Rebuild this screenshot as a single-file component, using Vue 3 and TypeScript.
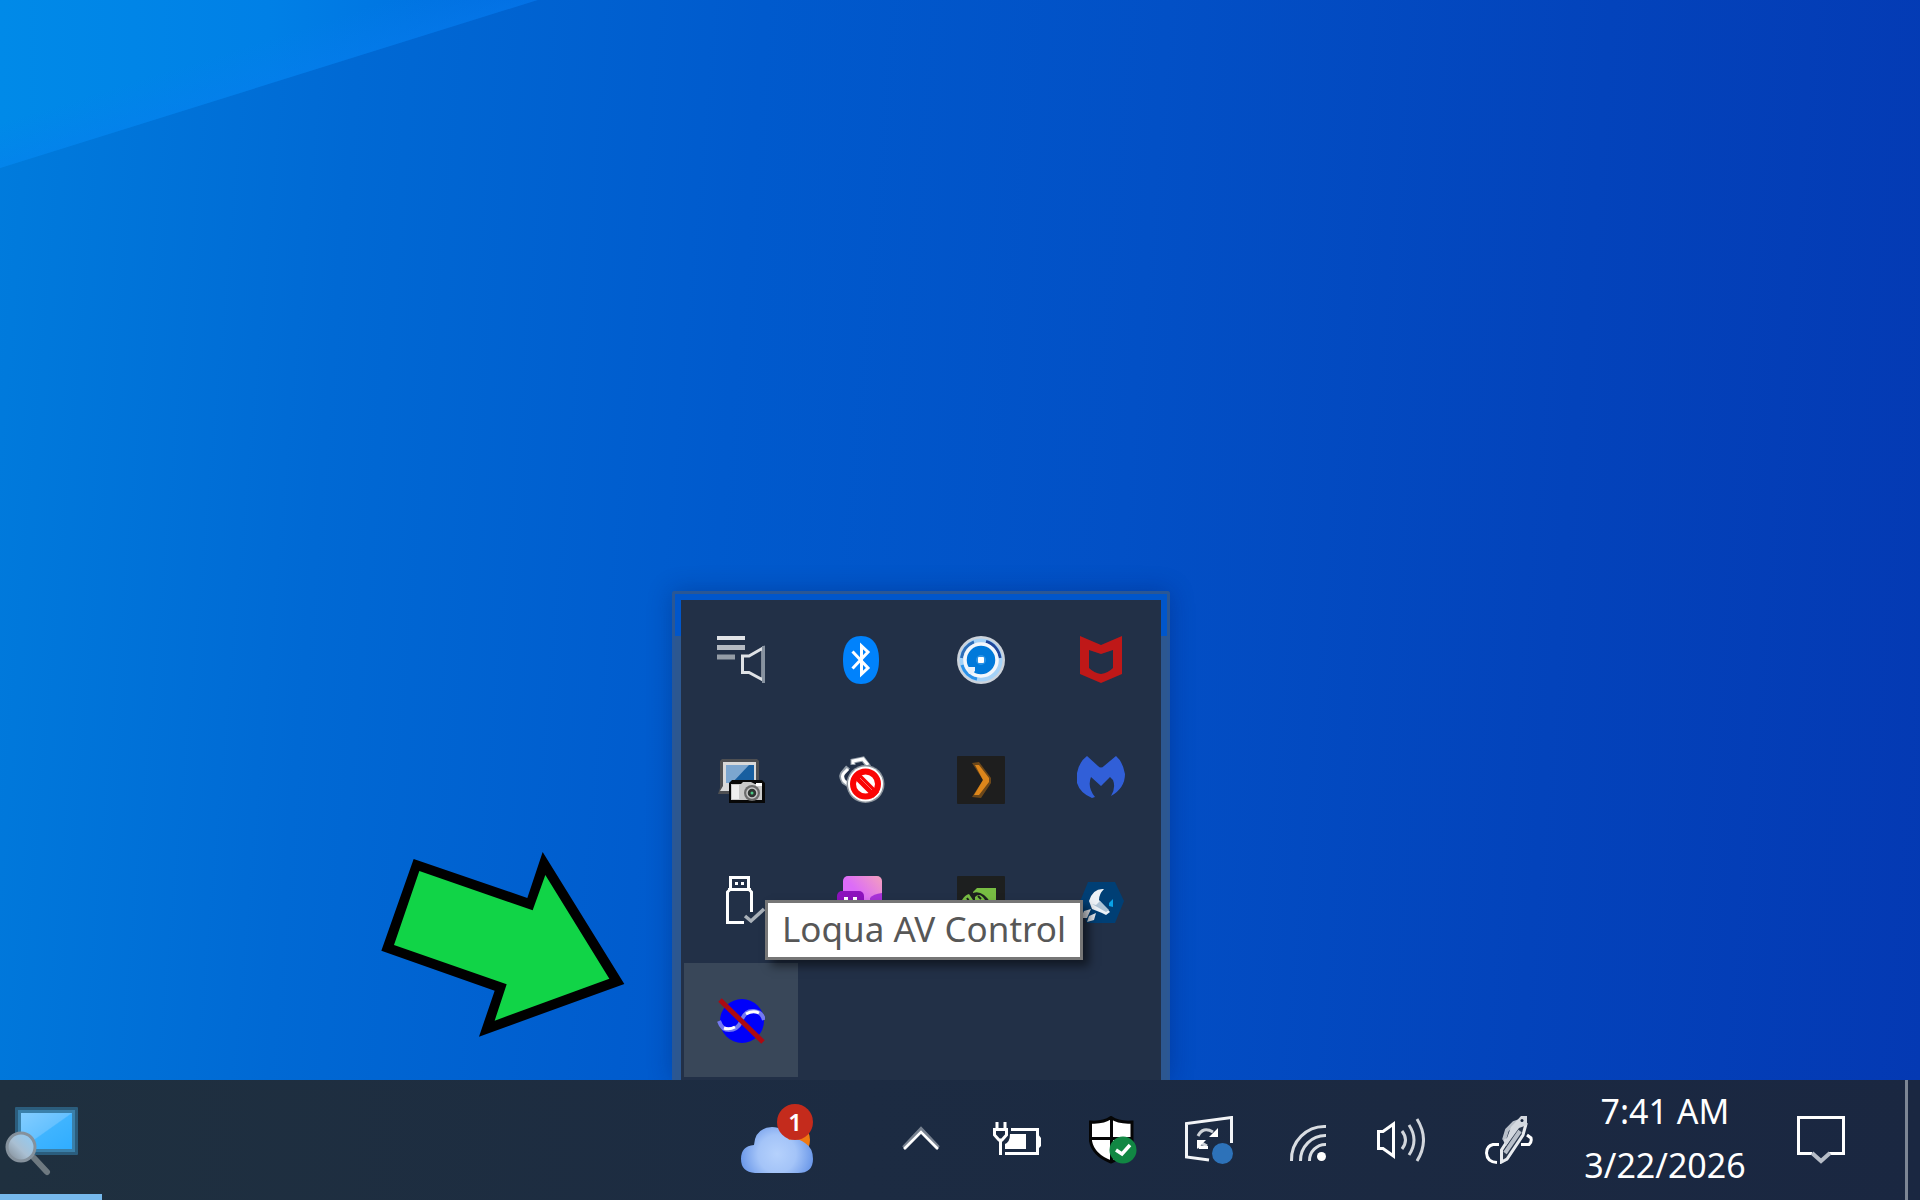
<script setup lang="ts">
interface TrayIcon {
  id: string
  label: string
}

const overflowIcons: TrayIcon[] = [
  { id: 'audio', label: 'Audio manager' },
  { id: 'bluetooth', label: 'Bluetooth devices' },
  { id: 'disc', label: 'Disc utility' },
  { id: 'mcafee', label: 'McAfee' },
  { id: 'capture', label: 'Screen capture' },
  { id: 'blocked', label: 'Headset blocked' },
  { id: 'plex', label: 'Plex' },
  { id: 'malwarebytes', label: 'Malwarebytes' },
  { id: 'usb', label: 'Safely remove hardware' },
  { id: 'robot', label: 'Assistant' },
  { id: 'nvidia', label: 'NVIDIA settings' },
  { id: 'rocket', label: 'Launcher' },
  { id: 'loqua', label: 'Loqua AV Control' },
]

const trayIcons: TrayIcon[] = [
  { id: 'chevron', label: 'Hide hidden icons' },
  { id: 'battery', label: 'Battery' },
  { id: 'shield', label: 'Windows Security' },
  { id: 'update', label: 'Windows Update' },
  { id: 'wifi', label: 'Network' },
  { id: 'volume', label: 'Volume' },
]
</script>

<template>
  <div class="screen">
    <main class="desktop">
      <svg class="beam" viewBox="0 0 540 168" preserveAspectRatio="none" aria-hidden="true">
        <defs>
          <linearGradient id="beamFill" x1="0" y1="0" x2="1" y2="0">
            <stop offset="0" stop-color="#008ae8" />
            <stop offset="0.5" stop-color="#0080e6" />
            <stop offset="1" stop-color="#006ade" />
          </linearGradient>
          <linearGradient id="beamEdge" gradientUnits="userSpaceOnUse" x1="200" y1="60" x2="216" y2="111">
            <stop offset="0" stop-color="#087cf0" stop-opacity="0" />
            <stop offset="1" stop-color="#087cf0" stop-opacity="0.5" />
          </linearGradient>
        </defs>
        <path d="M0 0H540L0 168Z" fill="url(#beamFill)" />
        <path d="M0 0H540L0 168Z" fill="url(#beamEdge)" />
      </svg>

      <svg class="arrow" viewBox="0 0 870 690" aria-hidden="true">
        <path d="M161 87L502 204L548 66L793 462L357 620L404 482L64 362Z" fill="#000" />
        <path d="M178 123L518 241L556 135L748 446L404 572L440 463L102 345Z" fill="#11d447" />
      </svg>

      <section class="overflow" aria-label="Hidden icons">
        <div class="panel">
          <button v-for="item in overflowIcons" :key="item.id" type="button" class="cell" :class="{ hover: item.id === 'loqua' }" :aria-label="item.label">
            <svg v-if="item.id === 'audio'" viewBox="0 0 48 48">
              <path d="M0 2H28" stroke="#e2e4e8" stroke-width="4" />
              <path d="M0 11.500H28" stroke="#b4bac2" stroke-width="5" />
              <path d="M0 21H18" stroke="#949ca6" stroke-width="5" />
              <path d="M25.500 20H32L46 12V44L32 36.500H25.500Z" fill="none" stroke="#dfe2e6" stroke-width="3" />
              <path d="M46.500 10V47" stroke="#8792a0" stroke-width="3" />
            </svg>
            <svg v-else-if="item.id === 'bluetooth'" viewBox="0 0 48 48">
              <path d="M24 0C38 0 42 12 42 24S38 48 24 48S6 36 6 24S10 0 24 0Z" fill="#0082fc" />
              <path d="M15.500 15.500L31 32L24.500 38V10L31 16L15.500 32.500" fill="none" stroke="#fff" stroke-width="3" />
            </svg>
            <svg v-else-if="item.id === 'disc'" viewBox="0 0 48 48">
              <circle cx="24" cy="24" r="24" fill="#cdd3db" />
              <circle cx="24" cy="24" r="19.500" fill="none" stroke="#a4d2f8" stroke-width="4" />
              <path d="M4.500 22A19.500 19.500 0 0 1 17 6" fill="none" stroke="#2c6db8" stroke-width="3" />
              <path d="M29 5.500A19.500 19.500 0 0 1 43 22" fill="none" stroke="#20469a" stroke-width="3" />
              <path d="M5 29A19.500 19.500 0 0 0 20 43" fill="none" stroke="#2b91e8" stroke-width="3" />
              <circle cx="24" cy="24" r="16" fill="#0079da" stroke="#f3f7fc" stroke-width="3.500" />
              <path d="M10 31H18V35L15 38H12Z" fill="#e8f0fa" />
              <circle cx="24" cy="24" r="5" fill="#2b93e6" />
              <rect x="21" y="21" width="6" height="6" rx="1" fill="#fff" />
            </svg>
            <svg v-else-if="item.id === 'mcafee'" viewBox="0 0 48 48">
              <path fill-rule="evenodd" d="M3 0L24 9L45 0V38L24 47L3 38ZM12 14V32Q17 37 24 38Q31 37 36 32V14L24 18Z" fill="#bf1818" />
            </svg>
            <svg v-else-if="item.id === 'capture'" viewBox="0 0 48 48">
              <path d="M5 3H40L42 5V28H14V36L12 38H1L3 32V5Z" fill="#4e4f52" />
              <path d="M6 6H39V28H12V35H3L6 30Z" fill="#d9d9d9" />
              <path d="M9 9H37V27H9Z" fill="#185fa0" />
              <path d="M9 9H32L15 27H9Z" fill="#7ca6cf" />
              <path d="M15 24H45L48 27V47H12V27Z" fill="#080808" />
              <path d="M14 28H24L26 26H34L38 28H45V44H14Z" fill="#c9c9c9" />
              <path d="M15 29H22V43H15Z" fill="#eee" />
              <circle cx="35" cy="37" r="8" fill="#6b6b6b" />
              <circle cx="35" cy="37" r="5" fill="#303532" stroke="#c9c9c9" stroke-width="1.500" />
              <circle cx="35" cy="37" r="1.500" fill="#49c984" />
              <path d="M39 27H45V30H39Z" fill="#fff" />
            </svg>
            <svg v-else-if="item.id === 'blocked'" viewBox="0 0 48 48">
              <path d="M12 29L7 26Q3 20 6 17L11 11M16 9V5L26 3L32 11" fill="none" stroke="#939da8" stroke-width="5" />
              <path d="M12 29L7 25Q4 20 7 17L11 13M16 8V5L26 3L31 9" fill="none" stroke="#fff" stroke-width="3" />
              <circle cx="28.500" cy="28" r="19" fill="#8c949d" />
              <circle cx="28.500" cy="28" r="17.500" fill="#fff" />
              <circle cx="28.500" cy="28" r="12.500" fill="none" stroke="#fa0505" stroke-width="6" />
              <path d="M18 18L39 39" stroke="#fa0505" stroke-width="8" />
              <path d="M23 22L35 34" stroke="#fff" stroke-width="1" opacity="0.400" />
            </svg>
            <svg v-else-if="item.id === 'plex'" viewBox="0 0 48 48">
              <rect width="48" height="48" rx="1" fill="#1e1e1e" />
              <path d="M15 7L22 6L34 22V27L24 42L15 41L26 24Z" fill="#6e4819" />
              <path d="M18 9H22L32 22V26L22 39H17L26 24Z" fill="#dd861b" />
            </svg>
            <svg v-else-if="item.id === 'malwarebytes'" viewBox="0 0 48 48">
              <path d="M10 0L21 10Q24 13 27 10L39 0Q46 6 48 18Q48 32 34 40Q39 32 36 24L33 21L24 30L14 21Q10 31 18 41L15 42Q3 37 0 27V17Q2 6 10 0Z" fill="#315fd8" />
            </svg>
            <svg v-else-if="item.id === 'usb'" viewBox="0 0 48 48">
              <g fill="none" stroke="#fff" stroke-width="3">
                <path d="M13.500 14V1.500H31.500V14M11 13.500H34M27 46.500H10.500V16L13 13.500M32 13.500L34.500 16V36" />
              </g>
              <path d="M18 6H21V9H18ZM24 6H27V9H24Z" fill="#fff" />
              <path d="M28 40L34 45L47 33" fill="none" stroke="#aab1b9" stroke-width="3.500" />
            </svg>
            <svg v-else-if="item.id === 'robot'" viewBox="0 0 48 48">
              <defs>
                <linearGradient id="robotFill" x1="0" y1="1" x2="1" y2="0">
                  <stop offset="0.500" stop-color="#dc6cf8" />
                  <stop offset="1" stop-color="#f4a0bd" />
                </linearGradient>
              </defs>
              <rect x="6" width="39" height="44" rx="5" fill="url(#robotFill)" />
              <path d="M33 30V22Q36 18 45 17V30Z" fill="#a832d8" />
              <rect y="15" width="27" height="24" rx="5" fill="#8d12bd" />
              <path d="M7 21H11V25H7ZM16 21H20V25H16Z" fill="#fff" />
            </svg>
            <svg v-else-if="item.id === 'nvidia'" viewBox="0 0 48 48">
              <rect width="48" height="48" rx="1" fill="#1d1f1f" />
              <path d="M16 16L20 12H39V36H19Z" fill="#78bd43" />
              <path d="M14 18Q24 12 34 27H14Z" fill="#1d1f1f" />
              <path d="M5 24Q8 19 12 18L16 24ZM18 21Q23 16 28 24H18Z" fill="#78bd43" />
              <path d="M10 22L12 25M21 20L24 23" stroke="#1d1f1f" stroke-width="2" />
            </svg>
            <svg v-else-if="item.id === 'rocket'" viewBox="0 0 48 48">
              <path d="M11 6H38L47 25L38 47H10L2 28Z" fill="#003f75" />
              <path d="M27 13Q16 12 12 25L15 33L25 37L29 39L33 36L22 24Q22 18 27 13Z" fill="#edf2f7" />
              <path d="M15 28L29 36L32 34L23 25L19 29Z" fill="#aec3d5" />
              <path d="M14 33L7 35L4 42L10 42ZM19 37L12 40L10 46L17 44Z" fill="#e5e9ef" />
              <path d="M32 27L36 23V31L32 30Z" fill="#0aa2e6" />
            </svg>
            <svg v-else viewBox="0 0 48 48">
              <circle cx="25" cy="25" r="22" fill="#0000fa" />
              <path d="M25 23Q29 14 37 15Q45 16 47 24" fill="none" stroke="#7479f0" stroke-width="4" />
              <path d="M29 18Q36 14 42 17" fill="none" stroke="#fff" stroke-width="3" />
              <path d="M2 25Q5 34 12 34Q20 34 24 26" fill="none" stroke="#7479f0" stroke-width="4" />
              <path d="M7 32Q12 34 18 31" fill="none" stroke="#fff" stroke-width="3" />
              <path d="M3 4L46 46" stroke="#ac0a12" stroke-width="5" />
            </svg>
          </button>
        </div>
        <div class="tooltip" role="tooltip">Loqua AV Control</div>
      </section>
    </main>

    <footer class="taskbar">
      <button type="button" class="app" aria-label="Screen magnifier">
        <svg viewBox="0 0 84 72">
          <defs>
            <linearGradient id="monitorFill" x1="0" y1="0" x2="1" y2="1">
              <stop offset="0" stop-color="#83cdff" />
              <stop offset="0.490" stop-color="#65c1ff" />
              <stop offset="0.510" stop-color="#3fb4ff" />
              <stop offset="1" stop-color="#30adff" />
            </linearGradient>
            <linearGradient id="lensFill" x1="0" y1="1" x2="1" y2="0">
              <stop offset="0" stop-color="#7d858d" />
              <stop offset="0.450" stop-color="#a9bfd2" />
              <stop offset="1" stop-color="#8ccdfa" />
            </linearGradient>
          </defs>
          <rect x="15" y="3" width="63" height="48" rx="1" fill="#2b5d7d" />
          <rect x="18" y="6" width="57" height="42" fill="#3a80aa" />
          <rect x="21" y="9" width="51" height="36" fill="url(#monitorFill)" />
          <path d="M34 54L47 68" stroke="#6e7980" stroke-width="6" stroke-linecap="round" />
          <circle cx="21" cy="43" r="14" fill="url(#lensFill)" stroke="#85919c" stroke-width="3" />
        </svg>
      </button>

      <div class="tray">
        <button type="button" class="weather" aria-label="Weather, 1 alert">
          <span class="weather-icon">
            <svg viewBox="0 0 72 72">
              <defs>
                <radialGradient id="cloudFill" gradientUnits="userSpaceOnUse" cx="36" cy="50" r="38">
                  <stop offset="0" stop-color="#b5d1fc" />
                  <stop offset="0.500" stop-color="#a4c4f8" />
                  <stop offset="1" stop-color="#6795e8" />
                </radialGradient>
              </defs>
              <circle cx="51" cy="36" r="18" fill="#ef7812" />
              <path d="M14 69Q0 68 0 55Q0 42 13 41Q14 24 31 23Q43 23 48 36Q56 33 64 39Q72 44 72 55Q72 69 57 69Z" fill="url(#cloudFill)" />
            </svg>
            <span class="badge">1</span>
          </span>
        </button>

        <button v-for="item in trayIcons" :key="item.id" type="button" class="tray-button" :aria-label="item.label">
          <svg v-if="item.id === 'chevron'" viewBox="0 0 48 48">
            <path d="M7 32L24 14L41 32" fill="none" stroke="#77818f" stroke-width="5" />
            <path d="M7 33L24 16L41 33" fill="none" stroke="#fff" stroke-width="2.500" />
          </svg>
          <svg v-else-if="item.id === 'battery'" viewBox="0 0 48 48">
            <path d="M4 6V13M12 6V13M0 13.500H15" stroke="#fff" stroke-width="3" />
            <path d="M1.500 14V19L6 24H9L13.500 19V14M7.500 23V39" fill="none" stroke="#fff" stroke-width="3" />
            <path d="M18 13.500H44.500V37.500H12" fill="none" stroke="#fff" stroke-width="3" />
            <path d="M45 18L48 22V30L45 33ZM17 18H33V33H12V28Q17 26 17 18Z" fill="#fff" />
          </svg>
          <svg v-else-if="item.id === 'shield'" viewBox="0 0 48 48">
            <path d="M1.500 6Q14 7 22 1.500Q30 7 43 6V25Q40 39 22 46Q4 39 1.500 25Z" fill="#fff" stroke="#050505" stroke-width="3" />
            <path d="M22.500 2V46M2 22.500H43" stroke="#050505" stroke-width="3" />
            <circle cx="34" cy="34" r="13.500" fill="#118743" />
            <path d="M27 34L33 38L41 29" fill="none" stroke="#fff" stroke-width="3.500" />
          </svg>
          <svg v-else-if="item.id === 'update'" viewBox="0 0 48 48">
            <path d="M24 44L1.500 41V7.500L46.500 1.500V27" fill="none" stroke="#f2f4f7" stroke-width="3" />
            <path d="M13 20Q18 10 28 16M22 30L15 26" fill="none" stroke="#cbd0d6" stroke-width="3" />
            <path d="M33 12V21H24ZM12 24H21L12 33ZM12 29L23 30V33H14Z" fill="#fff" />
            <circle cx="37.500" cy="37.500" r="10.500" fill="#2d72b9" />
          </svg>
          <svg v-else-if="item.id === 'wifi'" viewBox="0 0 48 48">
            <g fill="none" stroke="#d9dde2" stroke-width="3">
              <path d="M10.500 45A33 33 0 0 1 45 10.500M19.500 45A25 25 0 0 1 45 19.500M28.500 45A16 16 0 0 1 45 28.500" />
            </g>
            <circle cx="40.500" cy="40.500" r="4.500" fill="#fff" />
          </svg>
          <svg v-else viewBox="0 0 48 48">
            <path d="M1.500 15.500H6L16.500 8V40L6 32.500H1.500Z" fill="none" stroke="#fff" stroke-width="3" />
            <path d="M25 15Q32 24 25 33M32 9Q42 24 32 39M40 3Q53 24 40 45" fill="none" stroke="#d2d6dc" stroke-width="3" />
          </svg>
        </button>

        <button type="button" class="wide" aria-label="Windows Ink Workspace">
          <svg viewBox="0 0 48 48">
            <path d="M14 28.500H8Q1.500 30 1.500 37Q2 46 12 46.500M36 28.500H44Q47 26 46 22L42 19" fill="none" stroke="#fff" stroke-width="3" />
            <path d="M16.500 46V34L36 4L41 8L38 19L22 43Z" fill="#2a374c" stroke="#e8ebef" stroke-width="3" />
            <path d="M20 37L35 15M19 24L22 14L29 7L35 5" fill="none" stroke="#b8bfc9" stroke-width="4" />
            <path d="M18 24L22 22L26 11L36 0H42V9L34 12L21 30Z" fill="#d3d8df" />
            <circle cx="37" cy="4.500" r="1.500" fill="#14223a" />
          </svg>
        </button>

        <button type="button" class="clock">
          <time class="time" datetime="2026-03-22T07:41">7:41 AM</time>
          <time class="date" datetime="2026-03-22">3/22/2026</time>
        </button>

        <button type="button" class="wide" aria-label="Notifications">
          <svg viewBox="0 0 48 48">
            <path d="M15 37.500H1.500V1.500H46.500V37.500H32" fill="none" stroke="#fff" stroke-width="3" />
            <path d="M15 37L24 45L33 37" fill="none" stroke="#b7bdc7" stroke-width="4" />
          </svg>
        </button>
        <button type="button" class="show-desktop" aria-label="Show desktop"></button>
      </div>
    </footer>
  </div>
</template>

<style>
body {
  margin: 0;
}
</style>

<style scoped>
.screen {
  display: flex;
  flex-direction: column;
  min-height: 100vh;
  font-family: "Noto Sans", "Open Sans", sans-serif;
}

button {
  display: flex;
  align-items: center;
  justify-content: center;
  padding: 0;
  border: 0;
  background: none;
  color: inherit;
  font: inherit;
}

svg {
  display: block;
  width: 48px;
  height: 48px;
}

.desktop {
  position: relative;
  flex: 1;
  background: linear-gradient(95deg, #007cdd 0%, #0069d4 18%, #005acd 38%, #0250c6 58%, #0343bb 80%, #0439b3 100%);
}

.beam {
  width: 28%;
  height: 168px;
}

.arrow {
  position: absolute;
  right: 1270px;
  bottom: 20px;
  width: 290px;
  height: 230px;
}

.overflow {
  position: absolute;
  right: 750px;
  bottom: 0;
  box-sizing: border-box;
  width: 498px;
  padding: 6px 6px 0;
  border: 3px solid #2a5795;
  border-bottom: 0;
  border-radius: 3px 3px 0 0;
  background: linear-gradient(#0056cb 42px, #2c5790 42px);
  box-shadow: 0 0 24px rgba(0, 20, 80, 0.3);
}

.panel {
  display: grid;
  grid-template-columns: repeat(4, 1fr);
  grid-auto-rows: 120px;
  background: #223047;
}

.cell {
  margin: 3px;
}

.cell.hover {
  background: #394759;
}

.tooltip {
  position: absolute;
  top: 306px;
  left: 90px;
  box-sizing: border-box;
  width: 318px;
  height: 60px;
  border: 3px solid #767676;
  background: #fff;
  box-shadow: 6px 6px 9px rgba(0, 0, 0, 0.5);
  color: #575757;
  font-size: 35px;
  line-height: 52px;
  text-align: center;
  white-space: nowrap;
}

.taskbar {
  position: relative;
  display: flex;
  justify-content: space-between;
  height: 120px;
  background: linear-gradient(90deg, #1f303f, #1c2b42 45%, #1a2741);
  color: #fff;
}

.app {
  width: 102px;
  justify-content: flex-start;
  box-shadow: inset 0 -6px #76b9ed;
}

.app svg {
  width: 84px;
  height: 72px;
}

.tray {
  display: flex;
}

.weather,
.clock {
  width: 192px;
}

.weather-icon {
  position: relative;
}

.weather-icon svg {
  width: 72px;
  height: 72px;
}

.badge {
  position: absolute;
  top: 0;
  right: 0;
  width: 36px;
  height: 36px;
  border-radius: 50%;
  background: #c42b1c;
  font-size: 24px;
  font-weight: 600;
  line-height: 36px;
}

.tray-button {
  width: 96px;
}

.wide {
  width: 120px;
}

.clock {
  padding-bottom: 4px;
  flex-direction: column;
  font-size: 34px;
  line-height: 54px;
}

.show-desktop {
  width: 15px;
  margin-left: 24px;
  border-left: 3px solid #7d8695;
}
</style>
